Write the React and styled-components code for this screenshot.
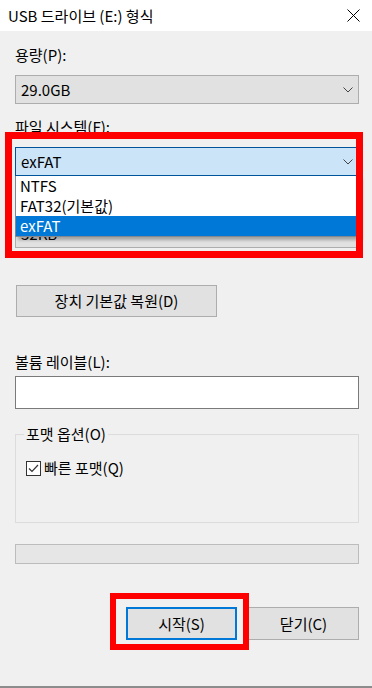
import React from "react";
import styled, { createGlobalStyle } from "styled-components";

const GlobalStyle = createGlobalStyle`
  body {
    margin: 0;
    background: #f0f0f0;
    font-family: "Noto Sans CJK KR", "Noto Sans", sans-serif;
    font-size: 15px;
    color: #000;
  }
`;

const Window = styled.div`
  position: relative;
  width: 372px;
  height: 688px;
  box-sizing: border-box;
  display: flex;
  flex-direction: column;
  background: #f0f0f0;
  border-bottom: 2px solid #8c8c8c;
  overflow: hidden;
`;

const TitleBar = styled.div`
  height: 31px;
  flex: none;
  display: flex;
  align-items: center;
  justify-content: space-between;
  padding: 0 12px 0 8px;
  background: #fff;
  font-size: 15px;
  line-height: 20px;
`;

const Body = styled.div`
  flex: 1;
  display: flex;
  flex-direction: column;
  padding: 14px 13px 0 15px;
`;

const Field = styled.div`
  position: relative;
  margin-bottom: 13px;
`;

const Label = styled.div`
  height: 20px;
  line-height: 20px;
  margin-bottom: ${(p) => p.$gap || 10}px;
  margin-top: ${(p) => p.$top || 0}px;
`;

const Combo = styled.div`
  height: 29px;
  box-sizing: border-box;
  display: flex;
  align-items: center;
  justify-content: space-between;
  padding: 0 5px 0 5px;
  background: ${(p) => (p.$focused ? "#cce4f7" : "#e1e1e1")};
  border: 1px solid ${(p) => (p.$focused ? "#005499" : "#adadad")};
  line-height: 20px;
`;

const DropList = styled.ul`
  position: absolute;
  left: 0;
  right: 0;
  top: 59px;
  margin: 0;
  padding: 0;
  list-style: none;
  background: #fff;
  border: 1px solid #828790;
  border-top: none;
  box-shadow: 3px 3px 3px rgba(0, 0, 0, 0.28);
  z-index: 2;
`;

const DropItem = styled.li`
  height: 20px;
  line-height: 20px;
  padding-left: 4px;
  background: ${(p) => (p.$selected ? "#0078d7" : "transparent")};
  color: ${(p) => (p.$selected ? "#fff" : "#000")};
`;

const Button = styled.button`
  font: inherit;
  color: #000;
  height: ${(p) => p.$height || 33}px;
  width: ${(p) => p.$width || 111}px;
  box-sizing: border-box;
  padding: 0;
  background: #e1e1e1;
  border: ${(p) => (p.$default ? "2px solid #0078d7" : "1px solid #adadad")};
  line-height: 20px;
`;

const RestoreButton = styled(Button)`
  margin: 24px 0 0 1px;
  align-self: flex-start;
`;

const TextInput = styled.div`
  height: 33px;
  box-sizing: border-box;
  background: #fff;
  border: 1px solid #7a7a7a;
`;

const GroupBox = styled.fieldset`
  margin: 15px 0 0 0;
  padding: 14px 8px 0 10px;
  height: 99px;
  box-sizing: border-box;
  border: 1px solid #dcdcdc;
`;

const Legend = styled.legend`
  padding: 0 2px;
  margin-left: -2px;
  line-height: 20px;
`;

const CheckRow = styled.label`
  display: flex;
  align-items: center;
  gap: 3px;
  height: 20px;
  line-height: 20px;
`;

const CheckBox = styled.span`
  width: 15px;
  height: 15px;
  box-sizing: border-box;
  border: 1px solid #333;
  background: #fff;
  display: flex;
  align-items: center;
  justify-content: center;
`;

const Progress = styled.div`
  margin-top: 21px;
  height: 20px;
  box-sizing: border-box;
  background: #e6e6e6;
  border: 1px solid #bcbcbc;
`;

const ButtonRow = styled.div`
  display: flex;
  justify-content: flex-end;
  gap: 11px;
  margin-top: 43px;
`;

const Highlight = styled.div`
  position: absolute;
  left: ${(p) => p.$x}px;
  top: ${(p) => p.$y}px;
  width: ${(p) => p.$w}px;
  height: ${(p) => p.$h}px;
  box-sizing: border-box;
  border: ${(p) => p.$t}px solid #ff0000;
  pointer-events: none;
  z-index: 5;
`;

const Chevron = () => (
  <svg width="10" height="6" viewBox="0 0 10 6">
    <path d="M0.5 0.5 L5 5 L9.5 0.5" fill="none" stroke="#444" strokeWidth="1" />
  </svg>
);

const CloseIcon = () => (
  <svg width="13" height="13" viewBox="0 0 13 13">
    <path d="M0.5 0.5 L12.5 12.5 M12.5 0.5 L0.5 12.5" stroke="#000" strokeWidth="1" />
  </svg>
);

const CheckMark = () => (
  <svg width="11" height="9" viewBox="0 0 11 9">
    <path d="M1 4.5 L4 7.5 L10 1" fill="none" stroke="#333" strokeWidth="1.2" />
  </svg>
);

const fsOptions = ["NTFS", "FAT32(기본값)", "exFAT"];

export default function App() {
  return (
    <>
      <GlobalStyle />
      <Window>
        <TitleBar>
          <span>USB 드라이브 (E:) 형식</span>
          <CloseIcon />
        </TitleBar>
        <Body>
          <Field>
            <Label>용량(P):</Label>
            <Combo>
              <span>29.0GB</span>
              <Chevron />
            </Combo>
          </Field>
          <Field>
            <Label>파일 시스템(F):</Label>
            <Combo $focused>
              <span>exFAT</span>
              <Chevron />
            </Combo>
            <DropList>
              {fsOptions.map((item) => (
                <DropItem key={item} $selected={item === "exFAT"}>
                  {item}
                </DropItem>
              ))}
            </DropList>
          </Field>
          <Field>
            <Label>할당 단위 크기(A):</Label>
            <Combo>
              <span>32KB</span>
              <Chevron />
            </Combo>
          </Field>

          <RestoreButton $width={201} $height={32}>
            장치 기본값 복원(D)
          </RestoreButton>

          <Label $top={35} $gap={4}>
            볼륨 레이블(L):
          </Label>
          <TextInput />

          <GroupBox>
            <Legend>포맷 옵션(O)</Legend>
            <CheckRow>
              <CheckBox>
                <CheckMark />
              </CheckBox>
              빠른 포맷(Q)
            </CheckRow>
          </GroupBox>

          <Progress />

          <ButtonRow>
            <Button $default>시작(S)</Button>
            <Button>닫기(C)</Button>
          </ButtonRow>
        </Body>

        <Highlight $x={5} $y={132} $w={358} $h={126} $t={7} />
        <Highlight $x={110} $y={593} $w={139} $h={57} $t={6} />
      </Window>
    </>
  );
}
